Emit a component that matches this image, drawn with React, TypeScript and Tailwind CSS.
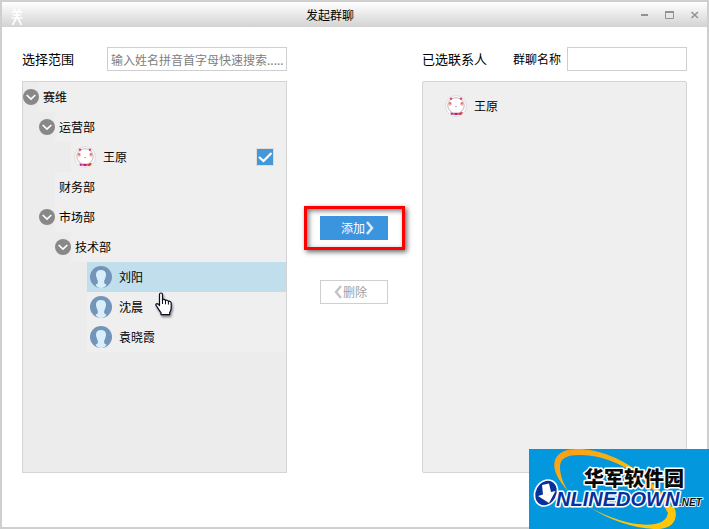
import { useState } from "react";
import type { ReactNode } from "react";
import clsx from "clsx";

interface TreeNode {
  id: string;
  name: string;
  kind: "group" | "member";
  avatar?: "cat" | "person";
  children?: TreeNode[];
}

const tree: TreeNode[] = [
  {
    id: "root",
    name: "赛维",
    kind: "group",
    children: [
      {
        id: "ops",
        name: "运营部",
        kind: "group",
        children: [{ id: "wangyuan", name: "王原", kind: "member", avatar: "cat" }],
      },
      { id: "finance", name: "财务部", kind: "group" },
      {
        id: "market",
        name: "市场部",
        kind: "group",
        children: [
          {
            id: "tech",
            name: "技术部",
            kind: "group",
            children: [
              { id: "liuyang", name: "刘阳", kind: "member", avatar: "person" },
              { id: "shenchen", name: "沈晨", kind: "member", avatar: "person" },
              { id: "yuanxiaoxia", name: "袁晓霞", kind: "member", avatar: "person" },
            ],
          },
        ],
      },
    ],
  },
];

function PersonAvatar() {
  return (
    <svg viewBox="0 0 22 22" className="size-[22px] shrink-0" aria-hidden="true">
      <circle cx="11" cy="11" r="11" fill="#7295b9" />
      <path
        d="M11 4c3.300 0 5 2 5 4.800 0 1.200-.1 2-.6 2.800-.2 1.200-.6 2.200-1.200 3v2.200c.2 1 1.300 1.500 2.300 2-.8 1.900-2.800 3.200-5.500 3.200s-4.700-1.300-5.500-3.200c1-.5 2.100-1 2.300-2v-2.200c-.6-.8-1-1.800-1.200-3C6.100 10.800 6 10 6 8.800 6 6 7.700 4 11 4z"
        fill="#d8effb"
      />
    </svg>
  );
}

function CatAvatar() {
  return (
    <svg viewBox="0 0 22 22" className="size-[22px] shrink-0" aria-hidden="true">
      <circle cx="11" cy="11" r="10.500" fill="#fafafa" stroke="#dedede" />
      <ellipse cx="11" cy="10.500" rx="8.200" ry="7.800" fill="#fff" stroke="#b9989c" strokeWidth="0.700" />
      <circle cx="6" cy="3.800" r="1.300" fill="#d0508c" />
      <circle cx="16" cy="3.800" r="1.300" fill="#d0508c" />
      <circle cx="5" cy="9" r="1.700" fill="#f0a9a5" />
      <circle cx="17" cy="9" r="1.700" fill="#f0a9a5" />
      <path d="M4.200 8h2M15.800 8h2" stroke="#c8403a" strokeWidth="1" />
      <path d="M10.500 11.500h1" stroke="#7d5560" strokeWidth="0.900" />
      <path d="M5.500 17.300l3 1.200 2.500-.7 2.500.7L16.500 17l-.5 2.800-3-.3-2 .8-2-.8-3 .3z" fill="#c2187a" />
      <path d="M13.500 18.300l4.500-1.300-1.200 2.600-3.300-.2z" fill="#d5402f" />
    </svg>
  );
}

function ExpandButton({ open, label, onClick }: { open: boolean; label: string; onClick: () => void }) {
  return (
    <button type="button" aria-expanded={open} aria-label={label} onClick={onClick} className="size-4 shrink-0">
      <svg viewBox="0 0 16 16" className={clsx("size-4", !open && "-rotate-90")}>
        <circle cx="8" cy="8" r="8" fill="#888" />
        <path d="M3.700 6 8 10l4.300-4" fill="none" stroke="#fff" strokeWidth="1.700" />
      </svg>
    </button>
  );
}

function HandCursor() {
  return (
    <svg
      viewBox="0 0 20 26"
      className="pointer-events-none absolute top-[30px] left-[67px] z-10 h-[26px] w-5 drop-shadow-[1px_2px_1px_rgba(0,0,0,0.45)]"
      aria-hidden="true"
    >
      <path
        d="M5.500 2.500c0-2 3-2 3 0V8c.6-1 2.800-.8 3 .6.8-.8 2.700-.4 2.900.9 1-.7 2.800 0 2.800 1.600v5c0 2-.8 3-1.500 4.500v2H7v-2c-1.500-1.600-2.600-4-4.300-6.200C.8 12.300 2.800 10.800 4.300 12.200l1.200 1.300z"
        fill="#fff"
        stroke="#0c0c20"
        strokeWidth="1.200"
        strokeLinejoin="round"
      />
      <path d="M8.500 8v4M11.500 8.800v3.500M14.400 9.600v3" stroke="#0c0c20" strokeWidth="1" />
    </svg>
  );
}

interface BranchProps {
  nodes: TreeNode[];
  active: string;
  checked: boolean;
  onPick: (id: string) => void;
  onCheck: () => void;
}

function Branch({ nodes, ...rest }: BranchProps) {
  return (
    <ul>
      {nodes.map((node) => (
        <TreeItem key={node.id} node={node} {...rest} />
      ))}
    </ul>
  );
}

function TreeItem({ node, ...rest }: Omit<BranchProps, "nodes"> & { node: TreeNode }) {
  const [open, setOpen] = useState(true);
  const { active, checked, onPick, onCheck } = rest;

  if (node.kind === "member") {
    const isActive = node.id === active;
    return (
      <li className={clsx("relative ml-4 flex h-[30px] items-center", isActive ? "bg-[#c0deeb]" : "bg-[#efefef]")}>
        <button
          type="button"
          onClick={() => onPick(node.id)}
          className="flex h-full flex-1 items-center gap-[7px] pl-[3px] text-left"
        >
          {node.avatar === "cat" ? <CatAvatar /> : <PersonAvatar />}
          <span>{node.name}</span>
        </button>
        {node.avatar === "cat" && (
          <label className="mr-3 grid size-[18px] place-items-center border border-[#e2dcd8]">
            <input
              type="checkbox"
              aria-label={node.name}
              checked={checked}
              onChange={onCheck}
              className="col-start-1 row-start-1 size-4 appearance-none bg-white checked:bg-[#4598d8]"
            />
            {checked && (
              <svg viewBox="0 0 16 16" className="pointer-events-none col-start-1 row-start-1 size-4">
                <path d="M2 8 6.500 12 14.500 4" fill="none" stroke="#fff" strokeWidth="2.200" />
              </svg>
            )}
          </label>
        )}
        {isActive && <HandCursor />}
      </li>
    );
  }

  return (
    <li>
      <div className="flex h-[30px] items-center">
        {node.children ? (
          <ExpandButton open={open} label={node.name} onClick={() => setOpen(!open)} />
        ) : (
          <span className="w-4" />
        )}
        <span className="flex h-full flex-1 items-center bg-[#efefef] pl-1">{node.name}</span>
      </div>
      {node.children && open && (
        <div className="pl-4">
          <Branch nodes={node.children} {...rest} />
        </div>
      )}
    </li>
  );
}

function WindowButton({ label, children }: { label: string; children: ReactNode }) {
  return (
    <button type="button" aria-label={label} className="grid h-full w-[25px] place-items-center">
      <svg viewBox="0 0 10 10" className="size-[10px]" fill="none" stroke="#929292">
        {children}
      </svg>
    </button>
  );
}

function TitleBar() {
  return (
    <header className="flex h-[25px] shrink-0 items-center bg-linear-to-b from-white to-[#d3d3d3]">
      <div className="flex w-[26px] justify-center pt-1 pl-1">
        <svg viewBox="0 0 14 18" className="h-[18px] w-[14px]" fill="none" stroke="#fff" strokeWidth="1.600" aria-hidden="true">
          <path d="M4 1l1.500 2M10 1 8.500 3M1.500 4h11M3 7h8M1.500 10h11M7 3v7M6 10.500 2.500 17M8 10.500l3.500 6.500" />
        </svg>
      </div>
      <h1 className="flex-1 text-center">发起群聊</h1>
      <div className="flex h-full">
        <WindowButton label="最小化">
          <path d="M1 5h7" strokeWidth="2" />
        </WindowButton>
        <WindowButton label="最大化">
          <path d="M.5 2v6.500h8V2" />
          <path d="M0 2h9" strokeWidth="2" />
        </WindowButton>
        <WindowButton label="关闭">
          <path d="M1.500 2l6.500 6M8 2 1.500 8" strokeWidth="1.500" />
        </WindowButton>
      </div>
    </header>
  );
}

function SiteLogo() {
  return (
    <svg
      viewBox="0 0 180 80"
      className="absolute -right-0.5 -bottom-0.5 h-20 w-[180px]"
      fontFamily="'Liberation Sans', 'Noto Sans CJK SC', sans-serif"
      role="img"
      aria-label="华军软件园 ONLINEDOWN.NET"
    >
      <defs>
        <linearGradient id="swoosh" x1="0" y1="0" x2="1" y2="1">
          <stop offset="0" stopColor="#f99a1c" />
          <stop offset="1" stopColor="#ffcc00" />
        </linearGradient>
      </defs>
      <rect width="180" height="80" fill="#0398dd" />
      <path
        d="M39 42C29 31 23 20 26 11 29 3 38 0 48 0c22 0 46 10 64 25l-3 1C92 14 68 5 50 6 38 6 31 9 31 18c0 8 3 16 8 24z"
        fill="url(#swoosh)"
      />
      <path d="M109 22c14 11 30 27 36 40l-7 1C133 50 120 35 108 25z" fill="#fdb515" />
      <path d="M60 58c22 12 47 20 66 17 10-2 15-8 12-17l7 0c5 10 0 21-14 22-22 1-51-9-71-22z" fill="#fdc60a" />
      <g strokeLinejoin="round" paintOrder="stroke">
        <text
          x="55"
          y="37"
          fontSize="20"
          fontWeight="900"
          fontFamily="'Noto Sans CJK SC', sans-serif"
          fill="#0a0a0a"
          stroke="#fff"
          strokeWidth="3"
        >
          华军软件园
        </text>
        <text x="27" y="57" fontSize="20" fontWeight="bold" fontStyle="italic" fill="#06309c" stroke="#fff" strokeWidth="3">
          NLINEDOWN
        </text>
        <text x="150" y="57" fontSize="10" fontWeight="bold" fontStyle="italic" fill="#111" stroke="#fff" strokeWidth="1.500">
          .NET
        </text>
      </g>
      <g transform="rotate(28 17 44)">
        <ellipse cx="17" cy="44" rx="11" ry="13.500" fill="#06309c" stroke="#fff" strokeWidth="1.600" />
      </g>
      <path d="M13 36l7-1.500 2 8.500 4.500-1L20 54 9 47l5-1.500z" fill="#fff" />
    </svg>
  );
}

export default function App() {
  const [active, setActive] = useState("liuyang");
  const [checked, setChecked] = useState(true);
  const [query, setQuery] = useState("");
  const [groupName, setGroupName] = useState("");

  return (
    <div className="relative flex min-h-screen flex-col border-2 border-[#cfcfcf] bg-white font-['Noto_Sans_CJK_SC',sans-serif] text-xs text-black">
      <TitleBar />
      <main className="grid flex-1 grid-cols-[1fr_135px_1fr] px-5 pt-5 pb-[54px]">
        <section className="flex flex-col gap-[10px]">
          <div className="flex h-6 items-center justify-between">
            <label htmlFor="search" className="text-[13px]">
              选择范围
            </label>
            <input
              id="search"
              value={query}
              onChange={(e) => setQuery(e.target.value)}
              placeholder="输入姓名拼音首字母快速搜索....."
              className="h-6 w-[180px] border border-[#cfcfcf] bg-white px-[3px] outline-none placeholder:text-[#808080]"
            />
          </div>
          <div className="flex-1 border border-[#d4d4d4] bg-[#ececec]">
            <Branch
              nodes={tree}
              active={active}
              checked={checked}
              onPick={setActive}
              onCheck={() => setChecked(!checked)}
            />
          </div>
        </section>

        <div className="flex flex-col items-center gap-10 pt-[169px] pr-px">
          <div className="relative">
            <button type="button" className="flex h-6 w-[68px] items-center justify-center bg-[#3a95de] pl-2 text-white">
              添加
              <svg viewBox="0 0 10 14" className="h-[14px] w-[10px]" fill="none" stroke="#dcecf9" strokeWidth="2.500">
                <path d="M2 1l5 6-5 6" />
              </svg>
            </button>
            <div className="pointer-events-none absolute -inset-y-[10px] -right-[17px] -left-4 border-3 border-[#fe0000] shadow-[2px_2px_5px_rgba(0,0,0,0.6),inset_2px_2px_5px_rgba(0,0,0,0.5)]" />
          </div>
          <button
            type="button"
            className="flex h-6 w-[68px] items-center justify-center border border-[#cfcfcf] bg-white pr-2 text-[#a0a0a0]"
          >
            <svg viewBox="0 0 10 14" className="h-[14px] w-[10px]" fill="none" stroke="#c4c4c4" strokeWidth="2.500">
              <path d="M8 1 3 7l5 6" />
            </svg>
            删除
          </button>
        </div>

        <section className="flex flex-col gap-[10px]">
          <div className="flex h-6 items-center">
            <h2 className="flex-1 text-[13px]">已选联系人</h2>
            <label htmlFor="group-name" className="mr-[6px]">
              群聊名称
            </label>
            <input
              id="group-name"
              value={groupName}
              onChange={(e) => setGroupName(e.target.value)}
              className="h-6 w-[120px] border border-[#cfcfcf] bg-white px-[3px] outline-none"
            />
          </div>
          <ul className="flex-1 rounded-xs border border-[#d4d4d4] bg-[#efefef] py-[9px] pl-[22px]">
            {checked && (
              <li className="flex h-[30px] items-center gap-[7px]">
                <CatAvatar />
                王原
              </li>
            )}
          </ul>
        </section>
      </main>
      <SiteLogo />
    </div>
  );
}
